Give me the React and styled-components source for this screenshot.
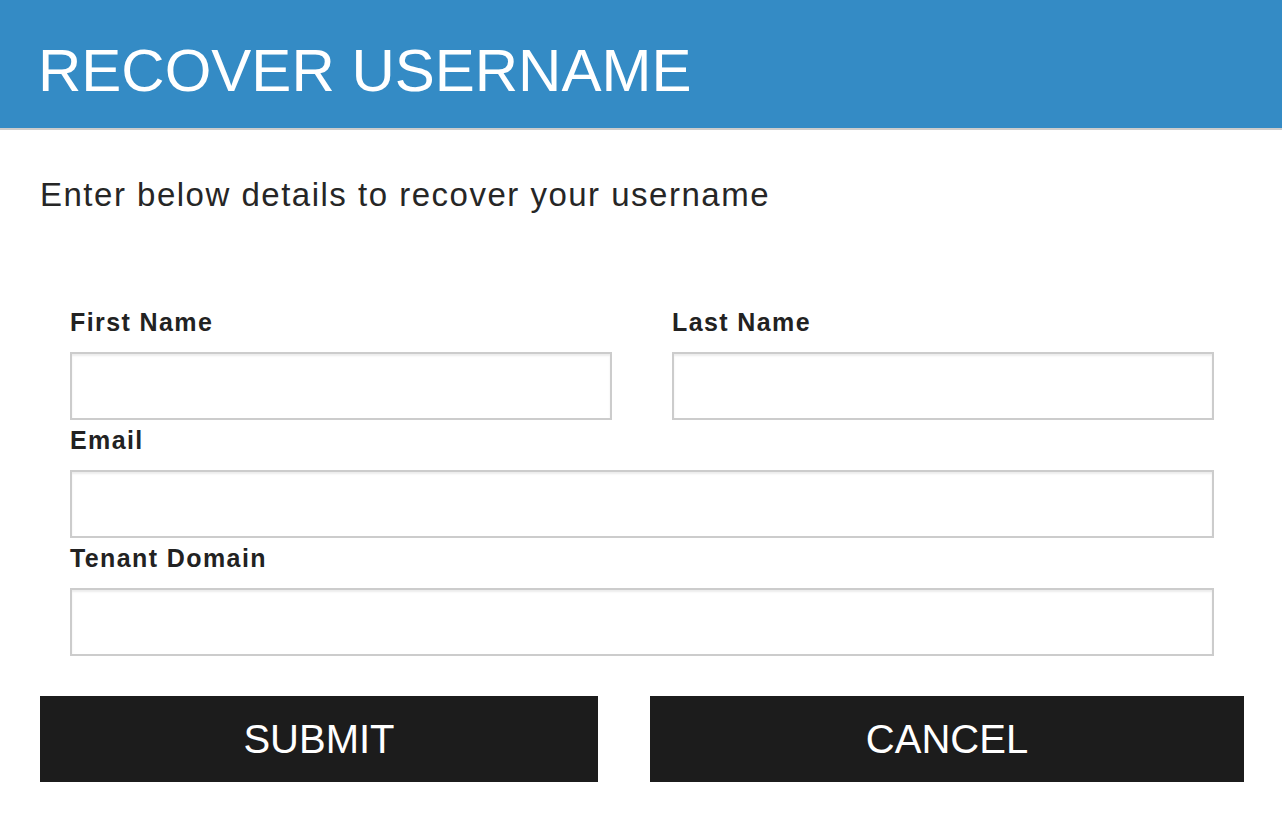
import React from "react";
import styled, { createGlobalStyle } from "styled-components";

const Global = createGlobalStyle`
  html, body { margin: 0; padding: 0; background: #ffffff; }
  body { font-family: "Liberation Sans", Arial, Helvetica, sans-serif; color: #222222; }
  * { box-sizing: border-box; }
`;

const Header = styled.header`
  height: 130px;
  padding: 41px 0 0 38px;
  background: #348bc5;
  border-bottom: 2px solid #cccccc;
`;

const Title = styled.h1`
  margin: 0;
  font-size: 60px;
  line-height: 1;
  font-weight: 400;
  color: #ffffff;
`;

const Main = styled.main`
  padding: 0 38px 40px 40px;
`;

const Subtitle = styled.p`
  margin: 48px 0 0;
  font-size: 33px;
  line-height: 1;
  letter-spacing: 1.5px;
  color: #262626;
`;

const Form = styled.form`
  margin-top: 99px;
  padding: 0 30px;
`;

const Row = styled.div`
  display: grid;
  grid-template-columns: ${(p) => (p.$split ? "1fr 1fr" : "1fr")};
  column-gap: 60px;
`;

const Field = styled.div`
  display: flex;
  flex-direction: column;
`;

const Label = styled.label`
  display: block;
  margin: ${(p) => (p.$first ? "0" : "8px")} 0 17px;
  font-size: 25px;
  line-height: 1;
  font-weight: 700;
  letter-spacing: 1.4px;
  color: #222222;
`;

const Input = styled.input`
  display: block;
  width: 100%;
  height: 68px;
  margin: 0;
  padding: 0 12px;
  border: 2px solid #cccccc;
  border-radius: 0;
  background: #ffffff;
  box-shadow: inset 0 2px 2px rgba(0, 0, 0, 0.075);
  font-family: inherit;
  font-size: 24px;
  outline: none;
`;

const Buttons = styled.div`
  display: grid;
  grid-template-columns: 558px 594px;
  column-gap: 52px;
  margin-top: 40px;
`;

const Button = styled.button`
  height: 86px;
  margin: 0;
  padding: 0;
  border: none;
  border-radius: 0;
  background: #1c1c1c;
  color: #ffffff;
  font-family: "Liberation Sans", Arial, sans-serif;
  font-size: 40px;
  line-height: 1;
  cursor: pointer;
`;

export default function App() {
  return (
    <>
      <Global />
      <Header>
        <Title>RECOVER USERNAME</Title>
      </Header>
      <Main>
        <Subtitle>Enter below details to recover your username</Subtitle>
        <Form onSubmit={(e) => e.preventDefault()}>
          <Row $split>
            <Field>
              <Label $first htmlFor="fn">First Name</Label>
              <Input id="fn" type="text" />
            </Field>
            <Field>
              <Label $first htmlFor="ln">Last Name</Label>
              <Input id="ln" type="text" />
            </Field>
          </Row>
          <Row>
            <Field>
              <Label htmlFor="em">Email</Label>
              <Input id="em" type="email" />
            </Field>
          </Row>
          <Row>
            <Field>
              <Label htmlFor="td">Tenant Domain</Label>
              <Input id="td" type="text" />
            </Field>
          </Row>
        </Form>
        <Buttons>
          <Button type="button">SUBMIT</Button>
          <Button type="button">CANCEL</Button>
        </Buttons>
      </Main>
    </>
  );
}
